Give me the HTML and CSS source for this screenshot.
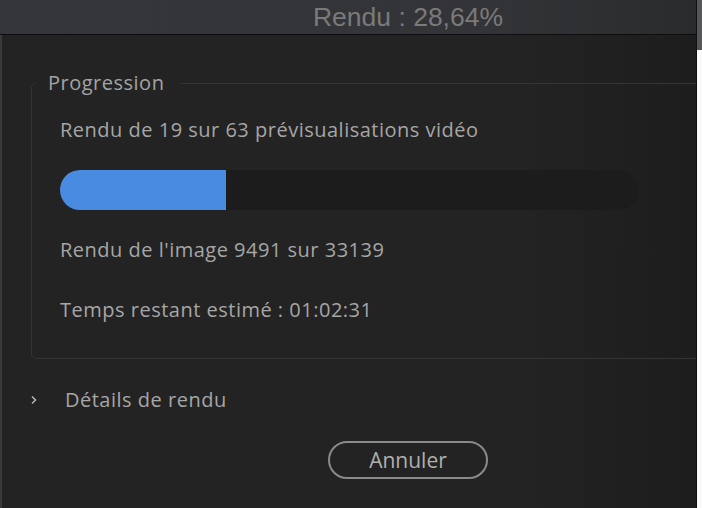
FILE: index.html
```html
<!DOCTYPE html>
<html lang="fr">
<head>
<meta charset="utf-8">
<title>Rendu</title>
<link rel="stylesheet" href="styles.css">
</head>
<body>
<div class="window">
  <div class="dialog">
    <div class="titlebar"><span class="title">Rendu : 28,64%</span></div>
    <div class="body">
      <fieldset class="group">
        <legend class="legend">Progression</legend>
        <div class="content">
          <div class="line first">Rendu de 19 sur 63 prévisualisations vidéo</div>
          <div class="track"><div class="fill" style="width:166px"></div></div>
          <div class="line second">Rendu de l'image 9491 sur 33139</div>
          <div class="line third">Temps restant estimé : 01:02:31</div>
        </div>
      </fieldset>
      <div class="details">
        <svg class="chev" width="6" height="10" viewBox="0 0 6 10"><path d="M1 1.5 L4.5 5 L1 8.5" fill="none" stroke="#b5b5b5" stroke-width="1.5"/></svg>
        <span class="details-label">Détails de rendu</span>
      </div>
      <div class="actions"><button class="btn">Annuler</button></div>
    </div>
  </div>
  <div class="edge"><div class="edge-top"></div></div>
</div>
</body>
</html>
```
FILE: styles.css
```css
html, body { margin: 0; padding: 0; }
body { background: #fafafa; font-family: "Open Sans", "Noto Sans", sans-serif; }
.window { display: flex; width: 702px; height: 508px; }
.dialog {
  width: 696px; height: 508px; overflow: hidden;
  border-right: 1px solid #0f0f0f;
  display: flex; flex-direction: column;
}
.titlebar {
  height: 34px; border-bottom: 1px solid #0e0e0e;
  background: linear-gradient(to right, #353639 0%, #333437 70%, #2a2b2d 100%);
  padding-left: 120px; display: flex; justify-content: center; align-items: center;
}
.title {
  font-family: "Liberation Sans", "Arial", sans-serif; font-size: 26.5px; line-height: 30px; color: #7a7a7a;
}
.body {
  flex: 1;
  background: linear-gradient(to right, #232323 0%, #232323 75%, #1d1d1d 100%);
  border-left: 2px solid #3a3a3b;
}
.group {
  margin: 36px -30px 0 29px; padding: 0 0 36px 0;
  border: 1px solid #343434; border-radius: 5px;
}
.legend {
  margin-left: 4px; padding: 0 17px 0 12px;
  font-size: 20px; letter-spacing: 0.5px; line-height: 24px; color: #a4a4a4;
}
.content { padding-left: 28px; }
.line { font-size: 20px; letter-spacing: 0.5px; line-height: 24px; color: #a6a6a6; }
.first { margin-top: 23px; }
.track {
  margin-top: 28px; width: 578px; height: 40px; border-radius: 20px;
  background: #1c1c1c; overflow: hidden;
}
.fill { height: 40px; background: #4a8be2; }
.second { margin-top: 28px; }
.third { margin-top: 36px; }
.details { display: flex; align-items: center; height: 24px; margin-top: 29px; padding-left: 29px; }
.chev { display: block; }
.details-label { margin-left: 28px; font-size: 20px; letter-spacing: 0.5px; line-height: 24px; color: #a6a6a6; }
.actions { display: flex; justify-content: center; padding-left: 120px; margin-top: 29px; }
.btn {
  width: 160px; height: 38px; border: 2px solid #8a8a8a; border-radius: 19px;
  background: transparent; color: #b0b0b0; font-family: "Open Sans", sans-serif; font-size: 21px;
  padding: 0; margin-left: -2px;
}
.edge { width: 5px; background: #fafafa; }
.edge-top { height: 50px; background: #555658; }
```
